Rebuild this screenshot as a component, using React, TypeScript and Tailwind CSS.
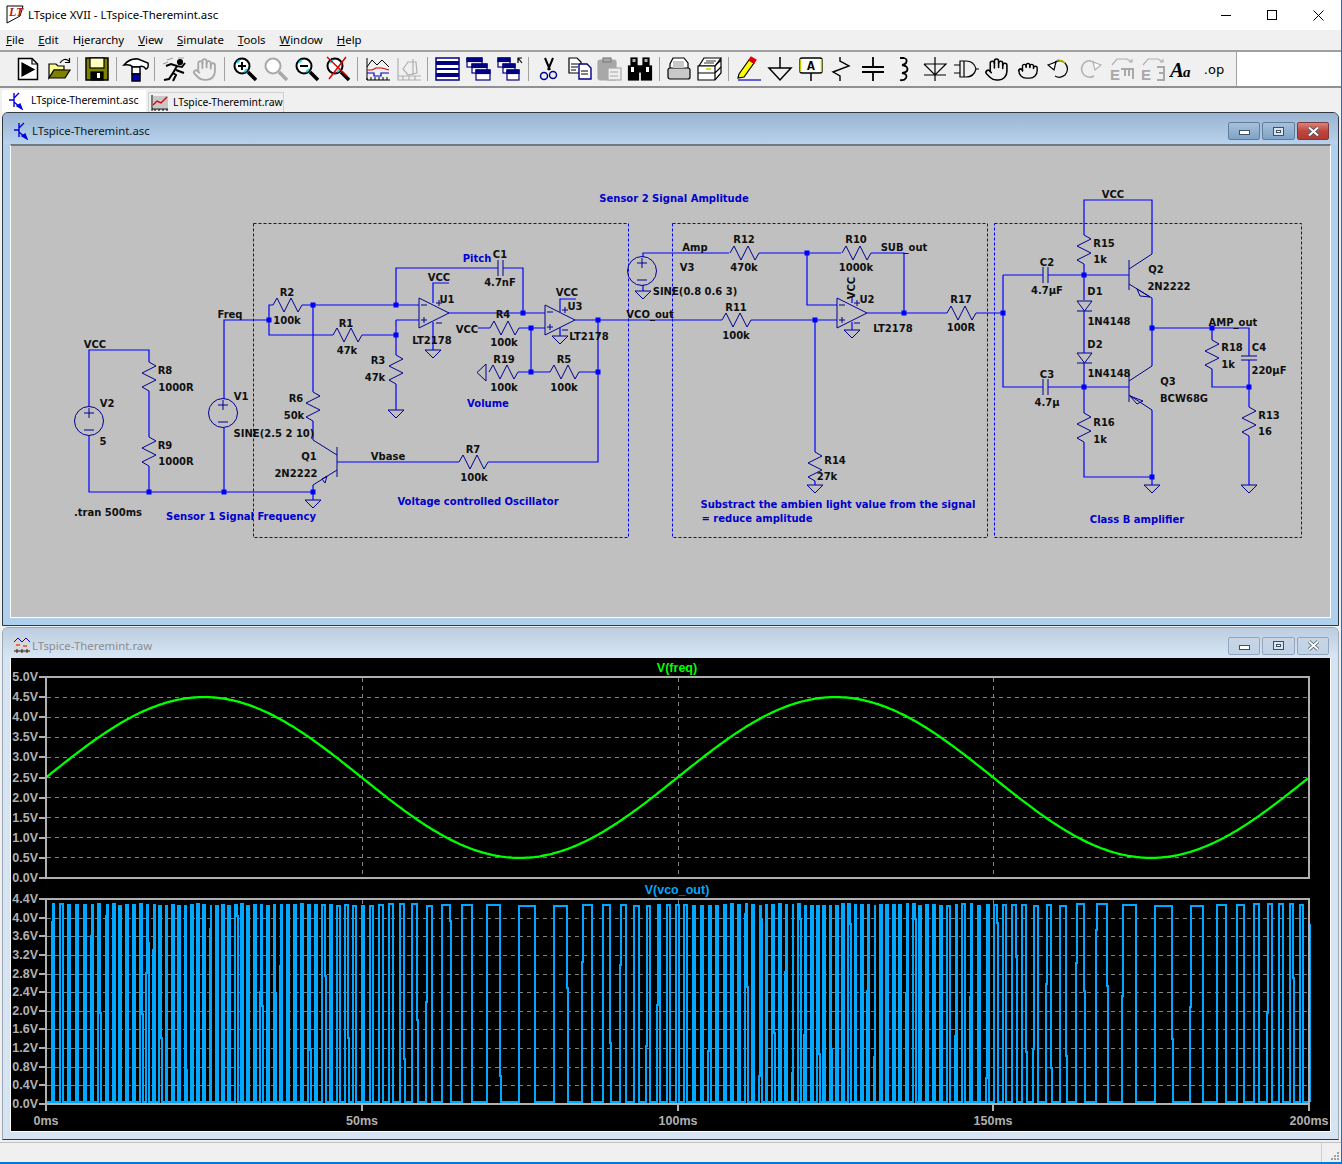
import type { ReactNode } from 'react';
import { Hand, Grab } from 'lucide-react';

const WIRE = '#0000ff';
const PART = '#000090';
const NOTE = '#0000cc';

const vr = (x: number, y: number) => `M${x} ${y}l7 4l-14 7l14 7l-14 7l7 4`;
const hr = (x: number, y: number) => `M${x} ${y}l4 -7l7 14l7 -14l7 14l4 -7`;
const gnd = (x: number, y: number) => `M${x - 8} ${y}h16l-8 8z`;

const wires = [
  'M89 406V350H149V362', 'M149 391V437', 'M149 466V492', 'M89 436V492H313', 'M224 399V320H269', 'M224 428V492',
  'M273 305H269V335H333', 'M302 305H396', 'M362 335H396', 'M313 305V392', 'M313 421V440', 'M313 485V500',
  'M396 305H419', 'M396 305V268H498', 'M503 268H523V313', 'M396 320H419', 'M396 320V355', 'M396 384V410',
  'M449 283H433V303', 'M433 322V350', 'M448 313H545', 'M478 328H490', 'M519 328H545', 'M531 328V372',
  'M518 372H550', 'M579 372H598', 'M576 299H560V312', 'M560 328V336', 'M575 320H722', 'M598 320V462H488',
  'M337 462H459', 'M751 320H837', 'M815 320V452', 'M815 481V485', 'M643 257V253H729', 'M643 285V291',
  'M759 253H841', 'M807 253V305H837', 'M871 253H904V313', 'M867 313H947', 'M976 313H1003', 'M852 303V297',
  'M852 322V330', 'M1084 235V200H1152V254', 'M1084 264V300', 'M1003 275H1043', 'M1048 275H1129', 'M1003 275V387H1043',
  'M1048 387H1129', 'M1084 311V353', 'M1084 363V413', 'M1084 442V477H1152V485', 'M1152 298V366', 'M1152 410V477',
  'M1152 328H1249V356', 'M1212 328V340', 'M1212 369V387H1249', 'M1249 360V407', 'M1249 436V485',
];

const dots = [
  [149, 492], [224, 492], [313, 492], [269, 320], [313, 305], [396, 305], [396, 335], [523, 313], [531, 328], [531, 372],
  [598, 320], [598, 372], [807, 253], [815, 320], [904, 313], [1003, 313], [1084, 275], [1084, 387], [1152, 328],
  [1212, 328], [1249, 387], [1152, 477],
];

const parts = [
  vr(149, 362), vr(149, 437), hr(273, 305), hr(333, 335), vr(396, 355), vr(313, 392), hr(459, 462), hr(490, 328),
  hr(489, 372), hr(550, 372), hr(730, 253), hr(722, 320), hr(842, 253), hr(947, 313), vr(815, 452), vr(1084, 235),
  vr(1084, 413), vr(1212, 340), vr(1249, 407),
  gnd(313, 500), gnd(396, 410), gnd(433, 350), gnd(560, 336), gnd(643, 291), gnd(852, 330), gnd(815, 485), gnd(1152, 485), gnd(1249, 485),
  'M486 364V381L477 372.5Z',
  // caps
  'M498 260V276M503 260V276', 'M1043 267V283M1048 267V283', 'M1043 379V395M1048 379V395', 'M1241 356H1257M1241 360H1257',
  // diodes
  'M1077 301H1092L1084.5 311ZM1077 311H1092', 'M1077 353H1092L1084.5 363ZM1077 363H1092',
  // transistors
  'M337 447V477M313 440L337 455M337 470L313 485M322 479L327 476L325 483Z',
  'M1129 260V290M1129 269L1152 254M1129 284L1152 298M1137 289L1150 297L1140 296Z',
  'M1129 372V402M1129 381L1152 366M1129 395L1152 410M1130 396L1143 401L1137 404Z',
];

const opamps = [[419, 298], [545, 305], [837, 298]];
const sources = [[89, 421], [223, 413], [642, 271]];

const labels: [string, number, number][] = [
  ['VCC', 95, 344], ['V2', 107, 403], ['5', 103, 441], ['R8', 165, 370], ['1000R', 176, 387], ['R9', 165, 445], ['1000R', 176, 461],
  ['.tran 500ms', 108, 512], ['V1', 241, 396], ['Freq', 230, 314], ['R2', 287, 292], ['100k', 287, 320], ['R1', 346, 323], ['47k', 347, 350],
  ['R3', 378, 360], ['47k', 375, 377], ['R6', 296, 398], ['50k', 294, 415], ['SINE(2.5 2 10)', 274, 433], ['Q1', 309, 456],
  ['2N2222', 296, 473], ['Vbase', 388, 456], ['R7', 473, 449], ['100k', 474, 477], ['C1', 500, 254], ['4.7nF', 500, 282], ['VCC', 439, 277],
  ['U1', 447, 299], ['LT2178', 432, 340], ['VCC', 467, 329], ['R4', 503, 314], ['100k', 504, 342], ['R19', 504, 359], ['100k', 504, 387],
  ['R5', 564, 359], ['100k', 564, 387], ['VCC', 567, 292], ['U3', 575, 306], ['LT2178', 589, 336], ['VCO_out', 650, 314], ['Amp', 695, 247],
  ['V3', 687, 267], ['SINE(0.8 0.6 3)', 695, 291], ['R12', 744, 239], ['470k', 744, 267], ['R11', 736, 307], ['100k', 736, 335], ['R10', 856, 239],
  ['1000k', 856, 267], ['SUB_out', 904, 247], ['U2', 867, 299], ['LT2178', 893, 328], ['R17', 961, 299], ['100R', 961, 327], ['R14', 835, 460],
  ['27k', 827, 476], ['VCC', 1113, 194], ['R15', 1104, 243], ['1k', 1100, 259], ['C2', 1047, 262], ['4.7µF', 1047, 290], ['Q2', 1156, 269],
  ['2N2222', 1169, 286], ['D1', 1095, 291], ['1N4148', 1109, 321], ['D2', 1095, 344], ['1N4148', 1109, 373], ['C3', 1047, 374], ['4.7µ', 1047, 402],
  ['Q3', 1168, 381], ['BCW68G', 1184, 398], ['R16', 1104, 422], ['1k', 1100, 439], ['AMP_out', 1233, 322], ['R18', 1232, 347], ['1k', 1228, 364],
  ['C4', 1259, 347], ['220µF', 1269, 370], ['R13', 1269, 415], ['16', 1265, 431],
];

const notes: [string, number, number][] = [
  ['Sensor 2 Signal Amplitude', 674, 198], ['Sensor 1 Signal Frequency', 241, 516], ['Pitch', 477, 258], ['Volume', 488, 403],
  ['Voltage controlled Oscillator', 478, 501], ['Class B amplifier', 1137, 519],
  ['Substract the ambien light value from the signal', 838, 504], ['= reduce amplitude', 757, 518],
];

function Schematic() {
  return (
    <svg width="1319" height="471" viewBox="11 146 1319 471" className="block" fontFamily="'DejaVu Sans', sans-serif" fontWeight="700" fontSize="10">
      {[253, 672, 994].map((x, i) => (
        <rect key={x} x={x + 0.5} y="223.5" width={[375, 315, 307][i]} height="314" fill="none" stroke={WIRE} strokeDasharray="3 2" />
      ))}
      <path d={parts.join('')} fill="none" stroke={PART} />
      {sources.map(([x, y]) => (
        <g key={x} fill="none" stroke={PART}>
          <circle cx={x} cy={y} r="14.5" />
          <path d={`M${x - 5} ${y - 8}h10M${x} ${y - 13}v10M${x - 5} ${y + 9}h10`} />
        </g>
      ))}
      {opamps.map(([x, y]) => (
        <g key={x} fill="none" stroke={PART}>
          <path d={`M${x} ${y}L${x + 30} ${y + 15}L${x} ${y + 30}Z`} />
          <path d={`M${x + 2} ${y + 7}h6M${x + 2} ${y + 22}h6M${x + 5} ${y + 19}v6M${x + 17} ${y + 5}h6M${x + 20} ${y + 2}v6M${x + 17} ${y + 25}h6`} />
        </g>
      ))}
      <path d={wires.join('')} fill="none" stroke={WIRE} strokeWidth="1.2" />
      {dots.map(([x, y]) => <rect key={`${x}-${y}`} x={x - 2.5} y={y - 2.5} width="5" height="5" fill={WIRE} />)}
      {labels.map(([t, x, y]) => (
        <text key={`${t}-${x}-${y}`} x={x} y={y + 4} textAnchor="middle" fill="#101010">{t}</text>
      ))}
      <text transform="translate(855 288) rotate(-90)" textAnchor="middle" fill="#101010">VCC</text>
      {notes.map(([t, x, y]) => (
        <text key={t} x={x} y={y + 4} textAnchor="middle" fill={NOTE}>{t}</text>
      ))}
    </svg>
  );
}

function sinePath() {
  let d = '';
  for (let x = 46; x <= 1309; x += 2) {
    const v = 2.5 + 2 * Math.sin(((x - 46) / 1263) * 4 * Math.PI);
    d += `${x === 46 ? 'M' : 'L'}${x} ${(878 - v * 40.2).toFixed(1)}`;
  }
  return d;
}

function vcoPath() {
  const top = 904;
  const bottom = 1102;
  let seed = 1234;
  const rand = () => {
    seed = (seed * 1103515245 + 12345) & 0x7fffffff;
    return seed / 0x7fffffff;
  };
  let x = 46;
  let d = `M46 ${bottom}`;
  let high = false;
  while (x < 1309) {
    const v = 2.5 + 2 * Math.sin(((x - 46) / 1263) * 4 * Math.PI);
    const f = v < 2.5 ? 0.028 + ((v - 0.5) / 2) * 0.09 : 0.118 + ((v - 2.5) / 2) * 0.042;
    const half = 0.5 / f;
    const wHigh = Math.max(1.8, half - 1.5);
    const step = high ? wHigh : 2 * half - wHigh;
    const nx = Math.min(1309, x + step);
    const px = Math.round(nx);
    const kink = rand() < 0.22 ? Math.round(top + 8 + rand() * 170) : 0;
    d += `H${px}`;
    if (kink) d += `V${kink}H${px + 1}`;
    d += high ? `V${bottom}` : `V${top + Math.round(rand() * 2)}`;
    high = !high;
    x = nx;
  }
  return d;
}

const GRID = '#808080';
const AXIS = '#b0b0b0';
const XTICKS: [number, string][] = [[46, '0ms'], [362, '50ms'], [678, '100ms'], [993, '150ms'], [1309, '200ms']];
const FREQ_TICKS = ['5.0V', '4.5V', '4.0V', '3.5V', '3.0V', '2.5V', '2.0V', '1.5V', '1.0V', '0.5V', '0.0V'];
const VCO_TICKS = ['4.4V', '4.0V', '3.6V', '3.2V', '2.8V', '2.4V', '2.0V', '1.6V', '1.2V', '0.8V', '0.4V', '0.0V'];

function Waveforms() {
  return (
    <svg width="1319" height="473" viewBox="11 658 1319 473" className="block bg-black" fontFamily="'Liberation Sans', sans-serif" fontWeight="700" fontSize="12.5">
      <text x="677" y="672" textAnchor="middle" fill="#00ff00">V(freq)</text>
      <text x="677" y="894" textAnchor="middle" fill="#00a8ff">V(vco_out)</text>
      <g stroke={GRID} strokeDasharray="4 4" shapeRendering="crispEdges">
        {FREQ_TICKS.map((t, i) => i > 0 && i < 10 && <path key={t} d={`M47 ${677 + i * 20.1}H1308`} />)}
        {VCO_TICKS.map((t, i) => i > 0 && i < 11 && <path key={t} d={`M47 ${Math.round(899 + (i * 205) / 11)}H1308`} />)}
        {[362, 678, 993].map((x) => <path key={x} d={`M${x} 678V877M${x} 900V1103`} />)}
      </g>
      <path d={vcoPath()} fill="none" stroke="#00a8ff" strokeWidth="2" shapeRendering="crispEdges" />
      <path d={sinePath()} fill="none" stroke="#00ff00" strokeWidth="2.3" />
      <g stroke={AXIS} fill="none" strokeWidth="2" shapeRendering="crispEdges">
        <rect x="46" y="677" width="1263" height="201" />
        <path d="M46 899H1309V1104H46Z" />
        {FREQ_TICKS.map((t, i) => <path key={t} d={`M39 ${677 + i * 20.1}H46`} />)}
        {VCO_TICKS.map((t, i) => <path key={t} d={`M39 ${899 + (i * 205) / 11}H46`} />)}
        {XTICKS.map(([x]) => <path key={x} d={`M${x} 1104V1111`} />)}
      </g>
      <g fill={AXIS}>
        {FREQ_TICKS.map((t, i) => <text key={t} x="38" y={681 + i * 20.1} textAnchor="end">{t}</text>)}
        {VCO_TICKS.map((t, i) => <text key={t} x="38" y={903 + (i * 205) / 11} textAnchor="end">{t}</text>)}
        {XTICKS.map(([x, t]) => <text key={t} x={x} y="1125" textAnchor="middle">{t}</text>)}
      </g>
    </svg>
  );
}

function Ic({ children, className = 'w-[31px]' }: { children: ReactNode; className?: string }) {
  return (
    <div className={`${className} flex shrink-0 justify-center`}>
      <svg width="28" height="28" viewBox="0 0 28 28" fill="none" stroke="#000" strokeWidth="1.2">{children}</svg>
    </div>
  );
}

function Sep({ className }: { className: string }) {
  return (
    <div className={`${className} flex shrink-0 justify-center`}>
      <div className="h-[24px] w-[1px] bg-[#a0a0a0]" />
    </div>
  );
}

function Lens({ c = '#000', mark }: { c?: string; mark?: ReactNode }) {
  return (
    <>
      <circle cx="11" cy="11" r="7.5" fill="#fff" stroke={c} strokeWidth="2" />
      {c === '#000' && <path d="M6 8A6 6 0 0 1 9 5.2M16 14A6 6 0 0 1 13 16.8" stroke="#20d0e0" strokeWidth="2" />}
      <path d="M17 17L25 25" stroke={c} strokeWidth="3.5" />
      {mark}
    </>
  );
}

function Win({ x, y, w = 14, h = 11 }: { x: number; y: number; w?: number; h?: number }) {
  return (
    <g>
      <rect x={x} y={y} width={w} height={h} fill="#fff" stroke="#000080" />
      <rect x={x} y={y} width={w} height="3.5" fill="#000080" stroke="#000080" />
    </g>
  );
}

function Toolbar() {
  return (
    <div className="flex h-[38px] shrink-0 border-y-2 border-t-[#a0a0a0] border-b-[#909090] bg-white">
      <div className="flex h-full w-[1237px] items-center border-r border-[#a0a0a0] bg-[#f0f0f0] pl-[12px]">
        <Ic><path d="M4.5 3.5H18L23.5 9V24.5H4.5Z" fill="#fff" strokeWidth="1.5" /><path d="M18 3.5V9H23.5" /><path d="M8 8L20 14.5L8 21Z" fill="#000" /></Ic>
        <Ic><path d="M4 23V9H11L13 11H19V15H9L4 23Z" fill="#ffff90" /><path d="M4 23L9 15H25L20 23Z" fill="#808000" /><path d="M15 8Q19 2 24 6M24.5 3V7.5H20" /></Ic>
        <Sep className="w-[7px]" />
        <Ic><rect x="3" y="3" width="22" height="22" fill="#808000" strokeWidth="1.5" /><rect x="7" y="3" width="14" height="10" fill="#ffffc0" /><rect x="8" y="17" width="12" height="8" fill="#000" /><rect x="14" y="18" width="3" height="5" fill="#fff" stroke="none" /></Ic>
        <Sep className="w-[8px]" />
        <Ic><path d="M2 10Q8 3 16 4L26 8Q27 13 24 14Q21 10 17 12H11Q8 9 2 10Z" fill="#fff" strokeWidth="1.5" /><rect x="10" y="12" width="8" height="7" fill="#fff" strokeWidth="1.5" /><rect x="10" y="19" width="8" height="7" fill="#0000c0" strokeWidth="1.5" /></Ic>
        <Sep className="w-[7px]" />
        <Ic><path d="M4 25L9 24L13 18L16 20L13 26M13 18L17 11L22 12L25 8M17 11L11 9L6 11M16 15L24 18" strokeWidth="2" /><path d="M7 5L13 3M3 9L8 7M18 3L24 3" stroke="#a0a0a0" /><circle cx="20" cy="7" r="2.5" fill="#000" /></Ic>
        <div className="flex w-[31px] shrink-0 justify-center"><Hand size={25} color="#a8a8a8" strokeWidth={1.8} /></div>
        <Sep className="w-[9px]" />
        <Ic><Lens mark={<path d="M7 11H15M11 7V15" strokeWidth="2" />} /></Ic>
        <Ic><Lens c="#a8a8a8" /></Ic>
        <Ic><Lens mark={<path d="M7 11H15" strokeWidth="2" />} /></Ic>
        <Ic><Lens mark={<path d="M3 2L23 21M22 2L5 24" stroke="#e00000" strokeWidth="1.5" />} /></Ic>
        <Sep className="w-[9px]" />
        <Ic><path d="M3 3V25H26M3 23V25M7 22V25M11 22V25M15 22V25M19 22V25M23 22V25" strokeWidth="1" /><path d="M3 12L8 5L13 10L18 5L25 12" strokeWidth="1" /><path d="M3 15H8L12 13H18L25 15" stroke="#e00000" /><path d="M3 18H10V21H17V18H25" stroke="#0000c0" /></Ic>
        <Ic><path d="M3 3V25H26M3 21H26M8 21V25M14 21V25M20 21V25" stroke="#b0b0b0" /><path d="M8 14L13 7H21L22 18L13 20Z M18 4V20" stroke="#b0b0b0" /></Ic>
        <Sep className="w-[7px]" />
        <Ic><rect x="3" y="3" width="23" height="22" fill="#fff" stroke="#000080" strokeWidth="1.5" /><rect x="3" y="6" width="23" height="4" fill="#000080" stroke="none" /><rect x="3" y="13" width="23" height="2" fill="#000080" stroke="none" /><rect x="3" y="18" width="23" height="4" fill="#000080" stroke="none" /></Ic>
        <Ic><Win x={3} y={3} w={15} h={9} /><Win x={8} y={9} w={15} h={9} /><Win x={12} y={15} w={14} h={10} /></Ic>
        <Ic><Win x={3} y={3} w={12} h={9} /><Win x={8} y={9} w={12} h={9} /><Win x={12} y={15} w={12} h={10} /><path d="M23 8V3H27M23 3L27 8" /></Ic>
        <Sep className="w-[9px]" />
        <Ic><path d="M10 3L15 15M18 3L13 15" strokeWidth="2" /><circle cx="9" cy="21" r="3.5" stroke="#000090" strokeWidth="1.5" /><circle cx="18" cy="20" r="3.5" stroke="#000090" strokeWidth="1.5" /></Ic>
        <Ic><path d="M3 3H11L15 7V18H3Z" fill="#fff" /><path d="M13 9H21L25 13V24H13Z" fill="#fff" stroke="#000080" strokeWidth="1.4" /><path d="M5 9H12M5 12H12M5 15H10M15 16H22M15 19H22" stroke="#000" /></Ic>
        <div className="-ml-[2px]"><Ic><rect x="3" y="5" width="18" height="20" rx="2" fill="#a8a8a8" stroke="#a8a8a8" /><rect x="8" y="3" width="8" height="4" fill="#a8a8a8" stroke="#808080" /><rect x="13" y="13" width="13" height="12" fill="#eeeeee" stroke="#a8a8a8" /><path d="M15 17H23M15 21H23" stroke="#a8a8a8" /></Ic></div>
        <Ic><rect x="2.5" y="11" width="10" height="14" fill="#000" /><rect x="15.5" y="11" width="10" height="14" fill="#000" /><rect x="5" y="3" width="6" height="8" fill="#000" /><rect x="17" y="3" width="6" height="8" fill="#000" /><rect x="12" y="11" width="4" height="6" fill="#000" /><rect x="6.5" y="4" width="3" height="3" fill="#b0b0b0" stroke="none" /><rect x="18.5" y="4" width="3" height="3" fill="#b0b0b0" stroke="none" /><rect x="5" y="12" width="3" height="5" fill="#fff" stroke="none" /><rect x="20" y="12" width="3" height="5" fill="#fff" stroke="none" /></Ic>
        <Sep className="w-[8px]" />
        <Ic><path d="M8 3H19L23 8V15H5V9Z" fill="#fff" /><rect x="3" y="13" width="22" height="11" rx="2" fill="#c8c8c8" /><rect x="8" y="6" width="11" height="7" fill="#c8c8c8" stroke="none" /></Ic>
        <div className="-ml-[1px]"><Ic><path d="M9 3H26L20 11H4Z" fill="#fff" /><path d="M11 6H21M9 8H19" strokeWidth="0.8" /><path d="M3 11H20L26 5V18L20 25H3Z" fill="#fff" /><path d="M3 18H20L26 12M20 11V25" /><path d="M11 14H16" stroke="#c8c800" strokeWidth="1.5" /></Ic></div>
        <Sep className="w-[9px]" />
        <Ic><path d="M3 25H26" stroke="#0000c0" /><path d="M4 19L14 5L19 8L9 22L3 23Z" fill="#ffff00" /><path d="M14 5L16 2L21 5L19 8Z" fill="#e00000" stroke="#e00000" /></Ic>
        <Ic><path d="M14 2V13M3 13H25L14 25Z" strokeWidth="1.5" /></Ic>
        <Ic><rect x="3" y="3" width="22" height="15" rx="2" strokeWidth="1.5" fill="#fff" /><path d="M3.5 4V17M24.5 4V17" stroke="#c8c800" strokeWidth="1.5" /><path d="M14 18V26" strokeWidth="1.5" /><text x="14" y="15" textAnchor="middle" fontFamily="'Liberation Mono', monospace" fontSize="13" fontWeight="700" fill="#000" stroke="none">A</text></Ic>
        <Ic><path d="M12 2V6L21 11L5 17L12 21V26" strokeWidth="1.4" /></Ic>
        <Ic><path d="M14 2V12M3 12H25M3 17H25M14 17V26" strokeWidth="1.8" /></Ic>
        <Ic><path d="M10 3H14Q18 4 16 8Q14 10 12 10Q19 11 17 16Q15 18 12 18Q18 19 16 23Q14 26 10 25" strokeWidth="1.8" /></Ic>
        <Ic><path d="M14 2V26M3 9H25L14 20L3 9M3 20H25" strokeWidth="1.2" /></Ic>
        <Ic><path d="M8 6H14Q22 6 24 14Q22 22 14 22H8ZM12 6V22M2 10H8M2 18H8M24 14H27" /></Ic>
        <div className="flex w-[31px] shrink-0 justify-center"><Hand size={25} color="#000" strokeWidth={1.5} /></div>
        <div className="flex w-[31px] shrink-0 justify-center"><Grab size={22} color="#000" strokeWidth={1.5} /></div>
        <Ic><path d="M8 9Q14 3 20 8Q25 14 20 20Q15 24 10 21" /><path d="M12 5Q16 4 20 8" stroke="#c0c000" /><path d="M3 10L11 7L9 15Z" fill="#fff" /></Ic>
        <Ic><path d="M20 9Q14 3 8 8Q3 14 8 20Q13 24 18 21" stroke="#b0b0b0" strokeWidth="1.5" /><path d="M25 10L17 7L19 15Z" fill="#fff" stroke="#b0b0b0" /></Ic>
        <Ic><path d="M5 10L10 4H20L25 7M25 4V7H22" stroke="#b0b0b0" /><text x="8" y="25" fontFamily="'Liberation Sans', sans-serif" fontSize="15" fontWeight="700" fill="#a8a8a8" stroke="none" textAnchor="middle">E</text><path d="M14 14H26V24M18 15V21M22 15V21" stroke="#a8a8a8" strokeWidth="2" /></Ic>
        <Ic><path d="M5 10L10 4H20L25 7M25 4V7H22" stroke="#b0b0b0" /><text x="8" y="25" fontFamily="'Liberation Sans', sans-serif" fontSize="15" fontWeight="700" fill="#a8a8a8" stroke="none" textAnchor="middle">E</text><path d="M19 12H26V25H19M21 18H26" stroke="#a8a8a8" strokeWidth="2" /></Ic>
        <Ic><text x="1" y="22" fontFamily="'Liberation Serif', serif" fontStyle="italic" fontWeight="700" fontSize="21" fill="#000" stroke="none">A</text><text x="14" y="22" fontFamily="'Liberation Serif', serif" fontStyle="italic" fontWeight="700" fontSize="15" fill="#000" stroke="none">a</text></Ic>
        <Ic><text x="14" y="19" textAnchor="middle" fontFamily="'DejaVu Sans', sans-serif" fontSize="13" fill="#000" stroke="none">.op</text></Ic>
      </div>
    </div>
  );
}

function TransistorIcon() {
  return (
    <svg width="18" height="18" viewBox="0 0 18 18" fill="none" stroke="#0000e0" strokeWidth="1.4">
      <path d="M6 1V15M1 8H6M6 6L11 1M6 10L13 16" />
      <path d="M14 17L9 14L12 12Z" fill="#0000e0" />
    </svg>
  );
}

function WaveIcon({ tab }: { tab?: boolean }) {
  return tab ? (
    <svg width="18" height="18" viewBox="0 0 18 18" fill="none">
      <rect x="2" y="2" width="15" height="12" fill="#c8c8c8" />
      <path d="M1 1V17M1 15H17M4 15V17M8 15V17M12 15V17M16 15V17" stroke="#000" />
      <path d="M2 11L6 7L10 9L16 3" stroke="#e00000" strokeWidth="1.4" />
    </svg>
  ) : (
    <svg width="18" height="18" viewBox="0 0 18 18" fill="none">
      <rect x="1" y="1" width="16" height="15" fill="#d8d8d8" />
      <path d="M1 5L5 1L9 5L13 1L17 5" stroke="#0000e0" />
      <path d="M3 8H7M10 9H14" stroke="#e00000" />
      <path d="M1 14H17M4 12V16M9 12V16M14 12V16" stroke="#202020" />
    </svg>
  );
}

function CapBtn({ kind, active }: { kind: 'min' | 'max' | 'close'; active: boolean }) {
  const bg =
    kind === 'close' && active
      ? 'bg-linear-to-b from-[#d9827a] via-[#c0463c] to-[#b03a32] border-[#7a3a3a]'
      : active
        ? 'bg-linear-to-b from-[#a8c0d8] to-[#7fa3c8] border-[#5f7d9c]'
        : 'bg-linear-to-b from-[#c8d6e6] to-[#c0d2e6] border-[#94a6bc]';
  return (
    <div className={`${bg} flex h-[18px] items-center justify-center rounded-[2px] border ${kind === 'max' ? 'w-[33px]' : 'w-[32px]'}`}>
      {kind === 'min' && <div className="mt-[3px] h-[5px] w-[11px] border border-[#405060] bg-white" />}
      {kind === 'max' && <div className="flex h-[9px] w-[11px] items-center justify-center border border-[#405060] bg-[#d8e4f0]"><div className="h-[3px] w-[5px] border border-[#405060] bg-white" /></div>}
      {kind === 'close' && (
        <svg width="13" height="11" viewBox="0 0 13 11"><path d="M2 1.5L11 9.5M11 1.5L2 9.5" stroke="#405060" strokeWidth="3.4" /><path d="M2 1.5L11 9.5M11 1.5L2 9.5" stroke="#fff" strokeWidth="2" /></svg>
      )}
    </div>
  );
}

function ChildWindow({ title, active, children }: { title: string; active: boolean; children: ReactNode }) {
  const frame = active ? 'bg-[#aed0ec] border-[#303840]' : 'bg-[#d6e4f2] border-[#9aa8b8]';
  const caption = active ? 'bg-linear-to-b from-[#9ab4d2] to-[#b8d2ec]' : 'bg-linear-to-b from-[#bccde0] to-[#d8e6f4]';
  return (
    <div className={`${frame} ${active ? 'h-[514px]' : 'h-[513px] mt-[1px]'} ml-[2px] flex w-[1337px] shrink-0 flex-col rounded-t-[6px] border px-[7px] border-b-[#303840]`}>
      <div className={`${caption} -mx-[7px] flex shrink-0 items-center rounded-t-[5px] pl-[10px] pr-[9px] pt-[5px] ${active ? 'h-[31px]' : 'h-[30px]'}`}>
        {active ? <TransistorIcon /> : <WaveIcon />}
        <span className={`ml-[1px] text-[11.4px] ${active ? 'text-[#101820]' : 'text-[#8c8c8c]'}`}>{title}</span>
        <div className="ml-auto flex gap-[2px]">
          <CapBtn kind="min" active={active} />
          <CapBtn kind="max" active={active} />
          <CapBtn kind="close" active={active} />
        </div>
      </div>
      {children}
    </div>
  );
}

const MENU: [string, string, string][] = [
  ['', 'F', 'ile'], ['', 'E', 'dit'], ['H', 'i', 'erarchy'], ['', 'V', 'iew'], ['', 'S', 'imulate'], ['', 'T', 'ools'], ['', 'W', 'indow'], ['', 'H', 'elp'],
];

export default function App() {
  return (
    <div className="relative flex h-[1164px] w-[1342px] flex-col overflow-hidden border-r border-b-2 border-[#0078d7] bg-[#f0f0f0] text-black font-['Noto_Sans',sans-serif]">
      <div className="flex h-[30px] shrink-0 items-center bg-white pl-[6px]">
        <svg width="18" height="20" viewBox="0 0 18 20" fill="none">
          <path d="M1 1H17L14 11L1 18Z" fill="#fff" stroke="#000" />
          <text x="3" y="11" fontFamily="'Liberation Serif', serif" fontStyle="italic" fontWeight="700" fontSize="12" fill="#b01818">LT</text>
        </svg>
        <span className="ml-[4px] text-[11.4px]">LTspice XVII - LTspice-Theremint.asc</span>
        <div className="ml-auto flex h-full items-center">
          <div className="flex w-[46px] justify-center"><div className="h-[1px] w-[10px] bg-black" /></div>
          <div className="flex w-[46px] justify-center"><div className="h-[10px] w-[10px] border border-black" /></div>
          <div className="flex w-[46px] justify-center"><svg width="11" height="11" viewBox="0 0 11 11"><path d="M.5 .5L10.5 10.5M10.5 .5L.5 10.5" stroke="#000" /></svg></div>
        </div>
      </div>
      <div className="flex h-[20px] shrink-0 items-center gap-[14px] pl-[6px] text-[11.4px]">
        {MENU.map(([a, b, c]) => (
          <span key={a + b + c}>{a}<span className="underline">{b}</span>{c}</span>
        ))}
      </div>
      <Toolbar />
      <div className="flex h-[24px] shrink-0 items-end whitespace-nowrap pl-[2px] text-[10.4px]">
        <div className="flex h-[22px] w-[144px] items-center gap-[5px] bg-white pl-[6px]"><TransistorIcon /><span>LTspice-Theremint.asc</span></div>
        <div className="ml-[2px] flex h-[20px] w-[136px] items-center gap-[4px] border border-b-0 border-[#d0d0d0] pl-[2px]"><WaveIcon tab /><span>LTspice-Theremint.raw</span></div>
      </div>
      <ChildWindow title="LTspice-Theremint.asc" active>
        <div className="border-x border-b border-t-2 border-white border-t-[#707880] bg-[#c0c0c0]"><Schematic /></div>
      </ChildWindow>
      <ChildWindow title="LTspice-Theremint.raw" active={false}>
        <div className="border-x border-b border-white bg-black"><Waveforms /></div>
      </ChildWindow>
      <div className="mt-auto flex h-[20px] shrink-0 justify-end border-t border-[#c0c0c0]">
        <div className="flex w-[20px] items-end justify-end border-l border-[#d0d0d0] pb-[1px] pr-[1px]">
          <svg width="10" height="10" viewBox="0 0 10 10" fill="#a0a0a0"><path d="M7 1h2v2H7zM4 4h2v2H4zM7 4h2v2H7zM1 7h2v2H1zM4 7h2v2H4zM7 7h2v2H7z" /></svg>
        </div>
      </div>
    </div>
  );
}
